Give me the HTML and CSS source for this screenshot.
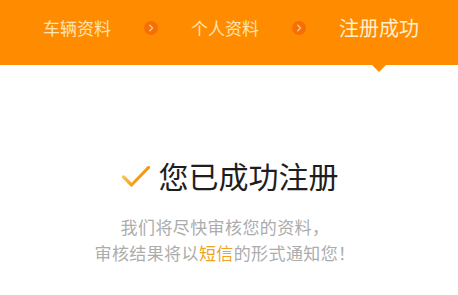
FILE: index.html
```html
<!DOCTYPE html>
<html lang="zh">
<head>
<meta charset="utf-8">
<link rel="stylesheet" href="styles.css">
</head>
<body>
<header class="steps">
  <span class="step">车辆资料</span>
  <span class="arrow"><svg viewBox="0 0 14 14" width="14" height="14"><path d="M5.8 4.3 L8.5 7 L5.8 9.7" fill="none" stroke="#ffc888" stroke-width="1.4" stroke-linecap="round" stroke-linejoin="round"/></svg></span>
  <span class="step">个人资料</span>
  <span class="arrow"><svg viewBox="0 0 14 14" width="14" height="14"><path d="M5.8 4.3 L8.5 7 L5.8 9.7" fill="none" stroke="#ffc888" stroke-width="1.4" stroke-linecap="round" stroke-linejoin="round"/></svg></span>
  <span class="step active">注册成功</span>
</header>
<main class="result">
  <h1 class="title">
    <svg class="check" viewBox="0 0 28 21" width="28" height="21">
      <defs>
        <linearGradient id="g" x1="0" y1="0" x2="1" y2="0">
          <stop offset="0" stop-color="#f9c25a"/>
          <stop offset="0.35" stop-color="#f5a019"/>
          <stop offset="1" stop-color="#f39a0c"/>
        </linearGradient>
      </defs>
      <path d="M1.5 11 L9.5 19 L26.5 1.5" fill="none" stroke="url(#g)" stroke-width="3.2" stroke-linecap="round" stroke-linejoin="round"/>
    </svg>
    <span>您已成功注册</span>
  </h1>
  <p class="desc">我们将尽快审核您的资料，<br>审核结果将以<span class="hl">短信</span>的形式通知您！</p>
</main>
</body>
</html>
```
FILE: styles.css
```css
html, body {
  margin: 0;
  padding: 0;
  background: #ffffff;
}
body {
  font-family: "Noto Sans CJK SC", "Noto Sans", sans-serif;
  width: 458px;
  height: 295px;
  overflow: hidden;
}
.steps {
  height: 65px;
  box-sizing: border-box;
  background: #ff8c00;
  display: flex;
  align-items: center;
  gap: 33px;
  padding: 0 0 9px 43px;
}
.step {
  font-size: 17px;
  line-height: 20px;
  color: #ffe3b0;
  position: relative;
  white-space: nowrap;
}
.step.active {
  font-size: 20px;
  color: #fff0cf;
}
.step.active::after {
  content: "";
  position: absolute;
  left: 50%;
  margin-left: -7px;
  top: calc(100% + 27px);
  border-left: 7px solid transparent;
  border-right: 7px solid transparent;
  border-top: 7px solid #ff8c00;
}
.arrow {
  width: 14px;
  height: 14px;
  border-radius: 50%;
  background: #f56f06;
  display: flex;
}
.result {
  padding-top: 92px;
  display: flex;
  flex-direction: column;
  align-items: center;
}
.title {
  margin: 0 0 0 2px;
  display: flex;
  align-items: center;
  gap: 9px;
  font-size: 30px;
  line-height: 36px;
  font-weight: normal;
  color: #1e1e1e;
}
.check {
  margin-top: 2px;
}
.desc {
  margin: 21px 8px 0 0;
  font-size: 17px;
  line-height: 26px;
  letter-spacing: 0.4px;
  color: #acacac;
  text-align: center;
}
.hl {
  color: #eda420;
}
```
